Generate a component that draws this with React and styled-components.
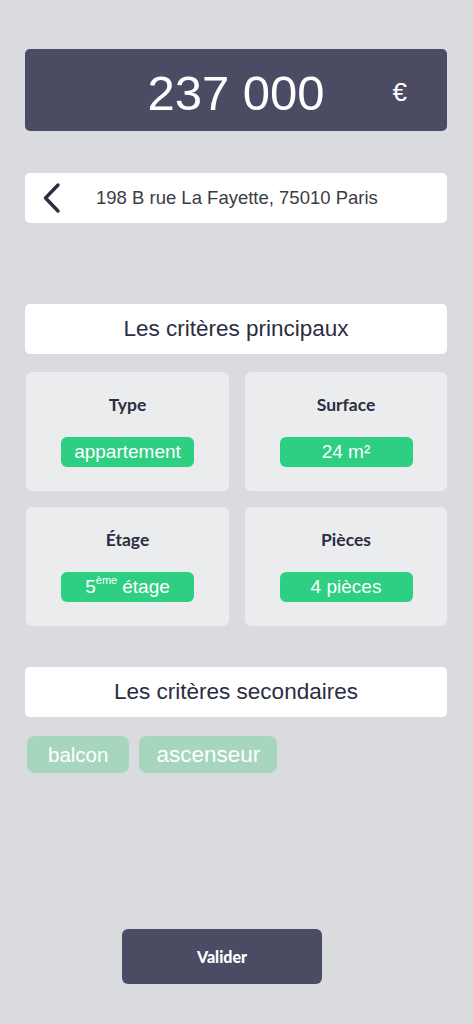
import React from "react";
import styled, { createGlobalStyle } from "styled-components";

const Global = createGlobalStyle`
  html, body { margin: 0; padding: 0; background: #dadbdf; }
  body { font-family: "Liberation Sans", Arial, sans-serif; }
  * { box-sizing: border-box; }
`;

const Page = styled.div`
  display: flex;
  flex-direction: column;
  padding: 49px 26px 40px 25px;
  min-height: 1024px;
`;

const PriceBox = styled.div`
  display: grid;
  grid-template-columns: 1fr auto 1fr;
  align-items: center;
  height: 82px;
  background: #4b4c63;
  border-radius: 5px;
  color: #fff;
`;

const Price = styled.div`
  grid-column: 2;
  font-size: 49px;
  line-height: 1;
  padding-top: 7px;
`;

const Currency = styled.div`
  grid-column: 3;
  justify-self: end;
  padding-right: 40px;
  padding-top: 4px;
  font-size: 26px;
  line-height: 1;
`;

const AddressBar = styled.div`
  display: flex;
  align-items: center;
  height: 50px;
  margin-top: 42px;
  background: #fff;
  border-radius: 5px;
  padding-left: 18px;
`;

const Address = styled.span`
  margin-left: 33px;
  font-size: 18.5px;
  color: #3b3c46;
`;

const SectionHeader = styled.div`
  display: flex;
  align-items: center;
  justify-content: center;
  height: 50px;
  margin-top: ${(p) => p.$top}px;
  background: #fff;
  border-radius: 5px;
  font-size: 22.5px;
  color: #2b2d42;
`;

const Grid = styled.div`
  display: grid;
  grid-template-columns: 203px 202px;
  gap: 16px;
  margin-top: 18px;
  margin-left: 1px;
`;

const Card = styled.div`
  display: flex;
  flex-direction: column;
  align-items: center;
  height: 119px;
  padding-top: 20px;
  background: #ebecee;
  border-radius: 6px;
`;

const CardTitle = styled.div`
  height: 26px;
  line-height: 26px;
  font-family: "Lato", "Open Sans", sans-serif;
  font-weight: 700;
  font-size: 17.5px;
  color: #2b2d42;
`;

const Pill = styled.div`
  display: flex;
  align-items: center;
  justify-content: center;
  width: 133px;
  height: 30px;
  margin-top: 19px;
  background: #2ecf82;
  border-radius: 6px;
  color: #fff;
  font-size: 19px;
`;

const Sup = styled.sup`
  font-size: 11px;
  vertical-align: 0;
  position: relative;
  top: -7px;
  margin-right: 5px;
`;

const Chips = styled.div`
  display: flex;
  gap: 10px;
  margin-top: 19px;
  margin-left: 2px;
`;

const Chip = styled.div`
  display: flex;
  align-items: center;
  height: 37px;
  padding: 0 ${(p) => p.$pad}px;
  background: #a6d6be;
  border-radius: 8px;
  color: #fff;
  font-size: ${(p) => p.$size}px;
`;

const Button = styled.button`
  align-self: flex-start;
  width: 200px;
  height: 55px;
  margin-top: 156px;
  margin-left: 97px;
  border: none;
  border-radius: 6px;
  background: #4b4c63;
  color: #fff;
  font-family: "Lato", "Open Sans", sans-serif;
  font-weight: 900;
  font-size: 16px;
`;

const Chevron = () => (
  <svg width="20" height="32" viewBox="0 0 20 32" fill="none">
    <path
      d="M15 3 L2.5 16 L15 29"
      stroke="#2b2d42"
      strokeWidth="3.4"
      strokeLinecap="round"
      strokeLinejoin="round"
    />
  </svg>
);

export default function App() {
  return (
    <>
      <Global />
      <Page>
        <PriceBox>
          <Price>237 000</Price>
          <Currency>€</Currency>
        </PriceBox>
        <AddressBar>
          <Chevron />
          <Address>198 B rue La Fayette, 75010 Paris</Address>
        </AddressBar>
        <SectionHeader $top={81}>Les critères principaux</SectionHeader>
        <Grid>
          <Card>
            <CardTitle>Type</CardTitle>
            <Pill>appartement</Pill>
          </Card>
          <Card>
            <CardTitle>Surface</CardTitle>
            <Pill>24 m²</Pill>
          </Card>
          <Card>
            <CardTitle>Étage</CardTitle>
            <Pill>
              5<Sup>ème</Sup>étage
            </Pill>
          </Card>
          <Card>
            <CardTitle>Pièces</CardTitle>
            <Pill>4 pièces</Pill>
          </Card>
        </Grid>
        <SectionHeader $top={41}>Les critères secondaires</SectionHeader>
        <Chips>
          <Chip $pad={21} $size={20.5}>balcon</Chip>
          <Chip $pad={17} $size={22.5}>ascenseur</Chip>
        </Chips>
        <Button>Valider</Button>
      </Page>
    </>
  );
}
